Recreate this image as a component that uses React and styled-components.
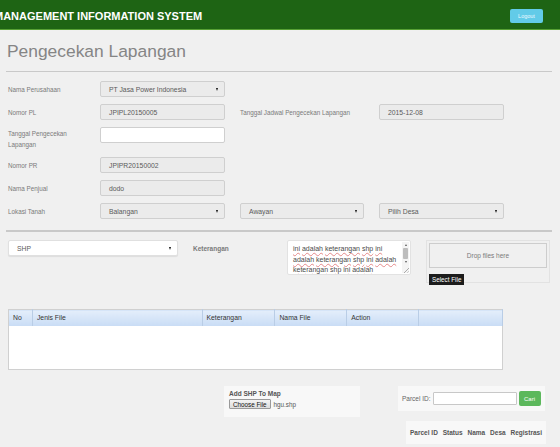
import styled, { createGlobalStyle } from 'styled-components';

const GlobalStyle = createGlobalStyle`
  html, body {
    margin: 0;
    padding: 0;
    background: #f0f0f0;
    font-family: "Liberation Sans", Arial, sans-serif;
    overflow: hidden;
  }
  * {
    box-sizing: border-box;
  }
`;

const Header = styled.header`
  height: 30px;
  background: #1e6414;
  border-bottom: 1px solid #57a035;
  display: flex;
  align-items: center;
  justify-content: space-between;
  padding-right: 17px;
`;

const Brand = styled.div`
  margin-left: -6px;
  margin-top: 2px;
  color: #fff;
  font-size: 11px;
  font-weight: bold;
  white-space: nowrap;
`;

const LogoutButton = styled.div`
  width: 33px;
  height: 14px;
  margin-top: 2px;
  border-radius: 2px;
  background: #62cbe8;
  color: #e9f9ff;
  font-size: 5.5px;
  display: flex;
  align-items: center;
  justify-content: center;
`;

const Main = styled.main`
  padding: 0 8px 0 6px;
`;

const Title = styled.h1`
  margin: 10px 0 0 1px;
  font-size: 17.4px;
  line-height: 22px;
  font-weight: normal;
  color: #858585;
`;

const Rule = styled.hr`
  margin: ${p => p.$top || 9}px 0 0;
  border: 0;
  border-top: ${p => p.$thick || 1}px solid #c9c9c9;
`;

const Form = styled.div`
  margin-top: 9px;
  padding-left: 2px;
  display: flex;
  flex-direction: column;
  gap: 7px;
`;

const FormRow = styled.div`
  display: grid;
  grid-template-columns: 77px 125px 124px 125px;
  column-gap: 15px;
  align-items: ${p => (p.$top ? 'start' : 'center')};
`;

const Label = styled.div`
  padding-top: ${p => (p.$wrap ? 1 : 0)}px;
  font-size: 6.3px;
  line-height: 11px;
  color: #7a7a7a;
`;

const Field = styled.div`
  height: 16px;
  padding: 0 6px 0 8px;
  border: 1px solid #cfcfcf;
  border-radius: 2px;
  background: ${p => p.$bg || '#ebebeb'};
  color: #5a5a5a;
  font-size: 6.8px;
  display: flex;
  align-items: center;
  justify-content: space-between;
  white-space: nowrap;
`;

const Caret = styled.span`
  width: 0;
  height: 0;
  border-left: 1.5px solid transparent;
  border-right: 1.5px solid transparent;
  border-top: 3px solid #111;
`;

const Select = ({ children, bg }) => (
  <Field $bg={bg}>
    <span>{children}</span>
    <Caret />
  </Field>
);

const Upload = styled.div`
  margin-top: 8px;
  padding-left: 2px;
  display: flex;
  align-items: flex-start;
`;

const ShpSelect = styled(Field)`
  width: 170px;
  background: #fff;
  border-color: #e0e0e0;
  box-shadow: 0 1px 1px rgba(0, 0, 0, 0.08);
`;

const SectionLabel = styled.div`
  width: 94px;
  margin-left: 15px;
  padding-top: 5px;
  font-size: 6.5px;
  font-weight: bold;
  color: #7a7a7a;
`;

const TextArea = styled.div`
  width: 124px;
  height: 35px;
  background: #fff;
  border: 1px solid #e2e2e2;
  border-radius: 2px;
  display: flex;
  overflow: hidden;
  position: relative;
`;

const TextBody = styled.div`
  flex: 1;
  padding: 3px 3px 0 5px;
  font-size: 7px;
  line-height: 10.5px;
  color: #4a4a4a;
`;

const Word = styled.span`
  text-decoration: underline wavy #e58a8a;
  text-decoration-thickness: 0.5px;
  text-underline-offset: 1px;
`;

const Scrollbar = styled.div`
  width: 7px;
  margin: 1px 1px 1px 0;
  display: flex;
  flex-direction: column;
  align-items: center;
  background: #f4f4f4;
`;

const ScrollArrow = styled.span`
  width: 0;
  height: 0;
  margin: 2px 0;
  border-left: 1.5px solid transparent;
  border-right: 1.5px solid transparent;
  ${p => (p.$up ? 'border-bottom' : 'border-top')}: 2px solid #555;
`;

const ScrollThumb = styled.div`
  width: 5px;
  height: 11px;
  background: #bdbdbd;
  border-radius: 1px;
`;

const Grip = styled.span`
  position: absolute;
  right: 1px;
  bottom: 1px;
  width: 5px;
  height: 5px;
  background: linear-gradient(135deg, transparent 45%, #aaa 50%, transparent 60%, transparent 70%, #aaa 75%, transparent 85%);
`;

const Dropzone = styled.div`
  width: 124px;
  height: 43px;
  margin-left: 15px;
  padding: 2px;
  border: 1px solid #e2e2e2;
`;

const DropArea = styled.div`
  height: 25px;
  border: 1px solid #cdcdcd;
  display: flex;
  align-items: center;
  justify-content: center;
  font-size: 6.5px;
  color: #7a7a7a;
`;

const BlackButton = styled.div`
  display: inline-flex;
  align-items: center;
  margin-top: 2px;
  height: 11px;
  padding: 0 3px;
  background: #1c1c1c;
  color: #fff;
  font-size: 6.3px;
`;

const Table = styled.table`
  margin: 26px 0 0 2px;
  width: 495px;
  border-collapse: collapse;
  border: 1px solid #d0d0d0;
  background: #fff;
  font-size: 6.8px;
  color: #333;
`;

const Th = styled.th`
  height: 16px;
  padding: 0 4px;
  text-align: left;
  font-weight: normal;
  background: linear-gradient(#e4eefb, #c8dcf5);
  border-right: 1px solid #b9cde6;
  width: ${p => p.$w}px;
`;

const Td = styled.td`
  height: 44px;
`;

const Bottom = styled.div`
  margin-top: 16px;
  display: flex;
  align-items: flex-start;
`;

const MapBox = styled.div`
  width: 136px;
  height: 31px;
  margin-left: 218px;
  padding: 4px 5px;
  background: #f8f8f8;
`;

const BoxTitle = styled.div`
  font-size: 6.5px;
  font-weight: bold;
  color: #555;
  line-height: 8px;
`;

const FileRow = styled.div`
  margin-top: 1px;
  display: flex;
  align-items: center;
  gap: 3px;
  font-size: 6.3px;
  color: #555;
`;

const ChooseButton = styled.div`
  height: 10px;
  padding: 0 3px;
  border: 1px solid #9a9a9a;
  border-radius: 1px;
  background: linear-gradient(#f4f4f4, #dcdcdc);
  color: #111;
  display: flex;
  align-items: center;
`;

const RightColumn = styled.div`
  margin-left: auto;
  display: flex;
  flex-direction: column;
  align-items: flex-end;
  gap: 10px;
`;

const ParcelBox = styled.div`
  width: 147px;
  height: 25px;
  margin-right: 7px;
  padding: 0 4px;
  background: #f8f8f8;
  display: flex;
  align-items: center;
  font-size: 6.5px;
  color: #666;
`;

const ParcelInput = styled.div`
  width: 84px;
  height: 13px;
  margin-left: 2px;
  border: 1px solid #c8c8c8;
  border-radius: 1px;
  background: #fff;
`;

const GreenButton = styled.div`
  width: 22px;
  height: 15px;
  margin-left: 2px;
  border-radius: 2px;
  background: #5cb85c;
  color: #fff;
  font-size: 6px;
  display: flex;
  align-items: center;
  justify-content: center;
`;

const ResultBox = styled.div`
  width: 140px;
  height: 23px;
  margin-right: 6px;
  padding: 0 4px;
  background: #f8f8f8;
  display: flex;
  align-items: center;
  justify-content: space-between;
  font-size: 6.5px;
  font-weight: bold;
  color: #555;
`;

const words = 'ini adalah keterangan shp ini adalah keterangan shp ini adalah keterangan shp ini adalah keterangan shp ini adalah'.split(' ');

const columns = [
  { name: 'No', w: 24 },
  { name: 'Jenis File', w: 170 },
  { name: 'Keterangan', w: 73 },
  { name: 'Nama File', w: 72 },
  { name: 'Action', w: 72 },
  { name: '', w: 84 },
];

export default function App() {
  return (
    <>
      <GlobalStyle />
      <Header>
        <Brand>MANAGEMENT INFORMATION SYSTEM</Brand>
        <LogoutButton>Logout</LogoutButton>
      </Header>
      <Main>
        <Title>Pengecekan Lapangan</Title>
        <Rule />
        <Form>
          <FormRow>
            <Label>Nama Perusahaan</Label>
            <Select>PT Jasa Power Indonesia</Select>
          </FormRow>
          <FormRow>
            <Label>Nomor PL</Label>
            <Field>JPIPL20150005</Field>
            <Label>Tanggal Jadwal Pengecekan Lapangan</Label>
            <Field>2015-12-08</Field>
          </FormRow>
          <FormRow $top>
            <Label $wrap>Tanggal Pengecekan<br />Lapangan</Label>
            <Field $bg="#fff" />
          </FormRow>
          <FormRow>
            <Label>Nomor PR</Label>
            <Field>JPIPR20150002</Field>
          </FormRow>
          <FormRow>
            <Label>Nama Penjual</Label>
            <Field>dodo</Field>
          </FormRow>
          <FormRow>
            <Label>Lokasi Tanah</Label>
            <Select>Balangan</Select>
            <Select>Awayan</Select>
            <Select>Pilih Desa</Select>
          </FormRow>
        </Form>
        <Rule $top={11} $thick={2} />
        <Upload>
          <ShpSelect>
            <span>SHP</span>
            <Caret />
          </ShpSelect>
          <SectionLabel>Keterangan</SectionLabel>
          <TextArea>
            <TextBody>
              {words.map((w, i) => (
                <span key={i}>
                  <Word>{w}</Word>{' '}
                </span>
              ))}
            </TextBody>
            <Scrollbar>
              <ScrollArrow $up />
              <ScrollThumb />
              <ScrollArrow />
            </Scrollbar>
            <Grip />
          </TextArea>
          <Dropzone>
            <DropArea>Drop files here</DropArea>
            <BlackButton>Select File</BlackButton>
          </Dropzone>
        </Upload>
        <Table>
          <thead>
            <tr>
              {columns.map(c => (
                <Th key={c.name || 'blank'} $w={c.w}>{c.name}</Th>
              ))}
            </tr>
          </thead>
          <tbody>
            <tr>
              <Td colSpan={6} />
            </tr>
          </tbody>
        </Table>
        <Bottom>
          <MapBox>
            <BoxTitle>Add SHP To Map</BoxTitle>
            <FileRow>
              <ChooseButton>Choose File</ChooseButton>
              <span>hgu.shp</span>
            </FileRow>
          </MapBox>
          <RightColumn>
            <ParcelBox>
              <span>Parcel ID:</span>
              <ParcelInput />
              <GreenButton>Cari</GreenButton>
            </ParcelBox>
            <ResultBox>
              <span>Parcel ID</span>
              <span>Status</span>
              <span>Nama</span>
              <span>Desa</span>
              <span>Registrasi</span>
            </ResultBox>
          </RightColumn>
        </Bottom>
      </Main>
    </>
  );
}
